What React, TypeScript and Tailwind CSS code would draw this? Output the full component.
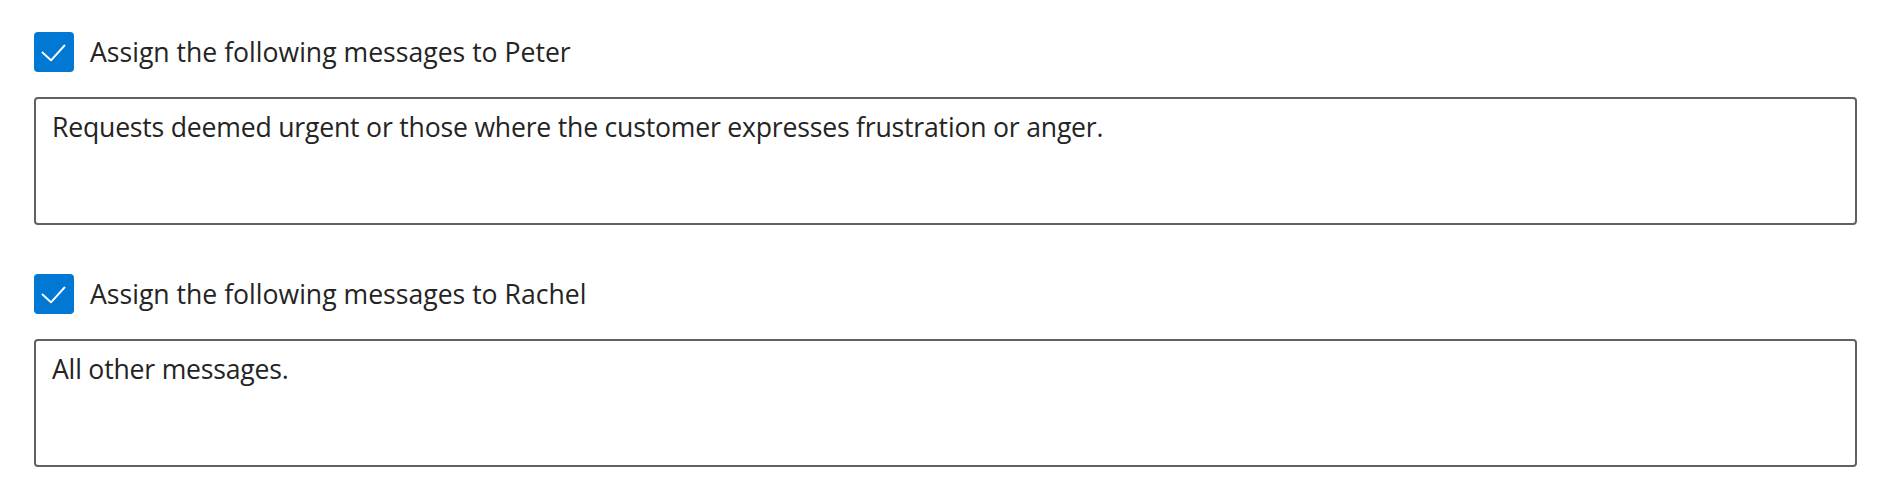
import React from "react";

function CheckBox() {
  return (
    <div className="w-[40px] h-[40px] shrink-0 rounded-[4px] bg-[#0078d4] flex items-center justify-center">
      <svg width="40" height="40" viewBox="0 0 40 40" fill="none">
        <path d="M8.5 20.5 L17 28.3 L30.5 13.5" stroke="#ffffff" strokeWidth="1.9" strokeLinecap="round" strokeLinejoin="round" />
      </svg>
    </div>
  );
}

function Section({ label, text, first }: { label: string; text: string; first?: boolean }) {
  return (
    <div className={first ? "" : "mt-[49px]"}>
      <div className="flex items-center gap-[16px] h-[40px]">
        <CheckBox />
        <span className="text-[26.6px] leading-[40px] text-[#242424]">{label}</span>
      </div>
      <div className="mt-[25px] h-[128px] border-2 border-[#616161] rounded-[4px] bg-white pl-[16px] pt-[8px]">
        <p className="text-[26.6px] leading-[40px] tracking-[-0.2px] text-[#242424]">{text}</p>
      </div>
    </div>
  );
}

export default function App() {
  return (
    <div
      className="w-[1894px] h-[500px] bg-white pl-[34px] pr-[37px] pt-[32px]"
      style={{ fontFamily: '"Open Sans", "Noto Sans", sans-serif' }}
    >
      <Section
        first
        label="Assign the following messages to Peter"
        text="Requests deemed urgent or those where the customer expresses frustration or anger."
      />
      <Section label="Assign the following messages to Rachel" text="All other messages." />
    </div>
  );
}
